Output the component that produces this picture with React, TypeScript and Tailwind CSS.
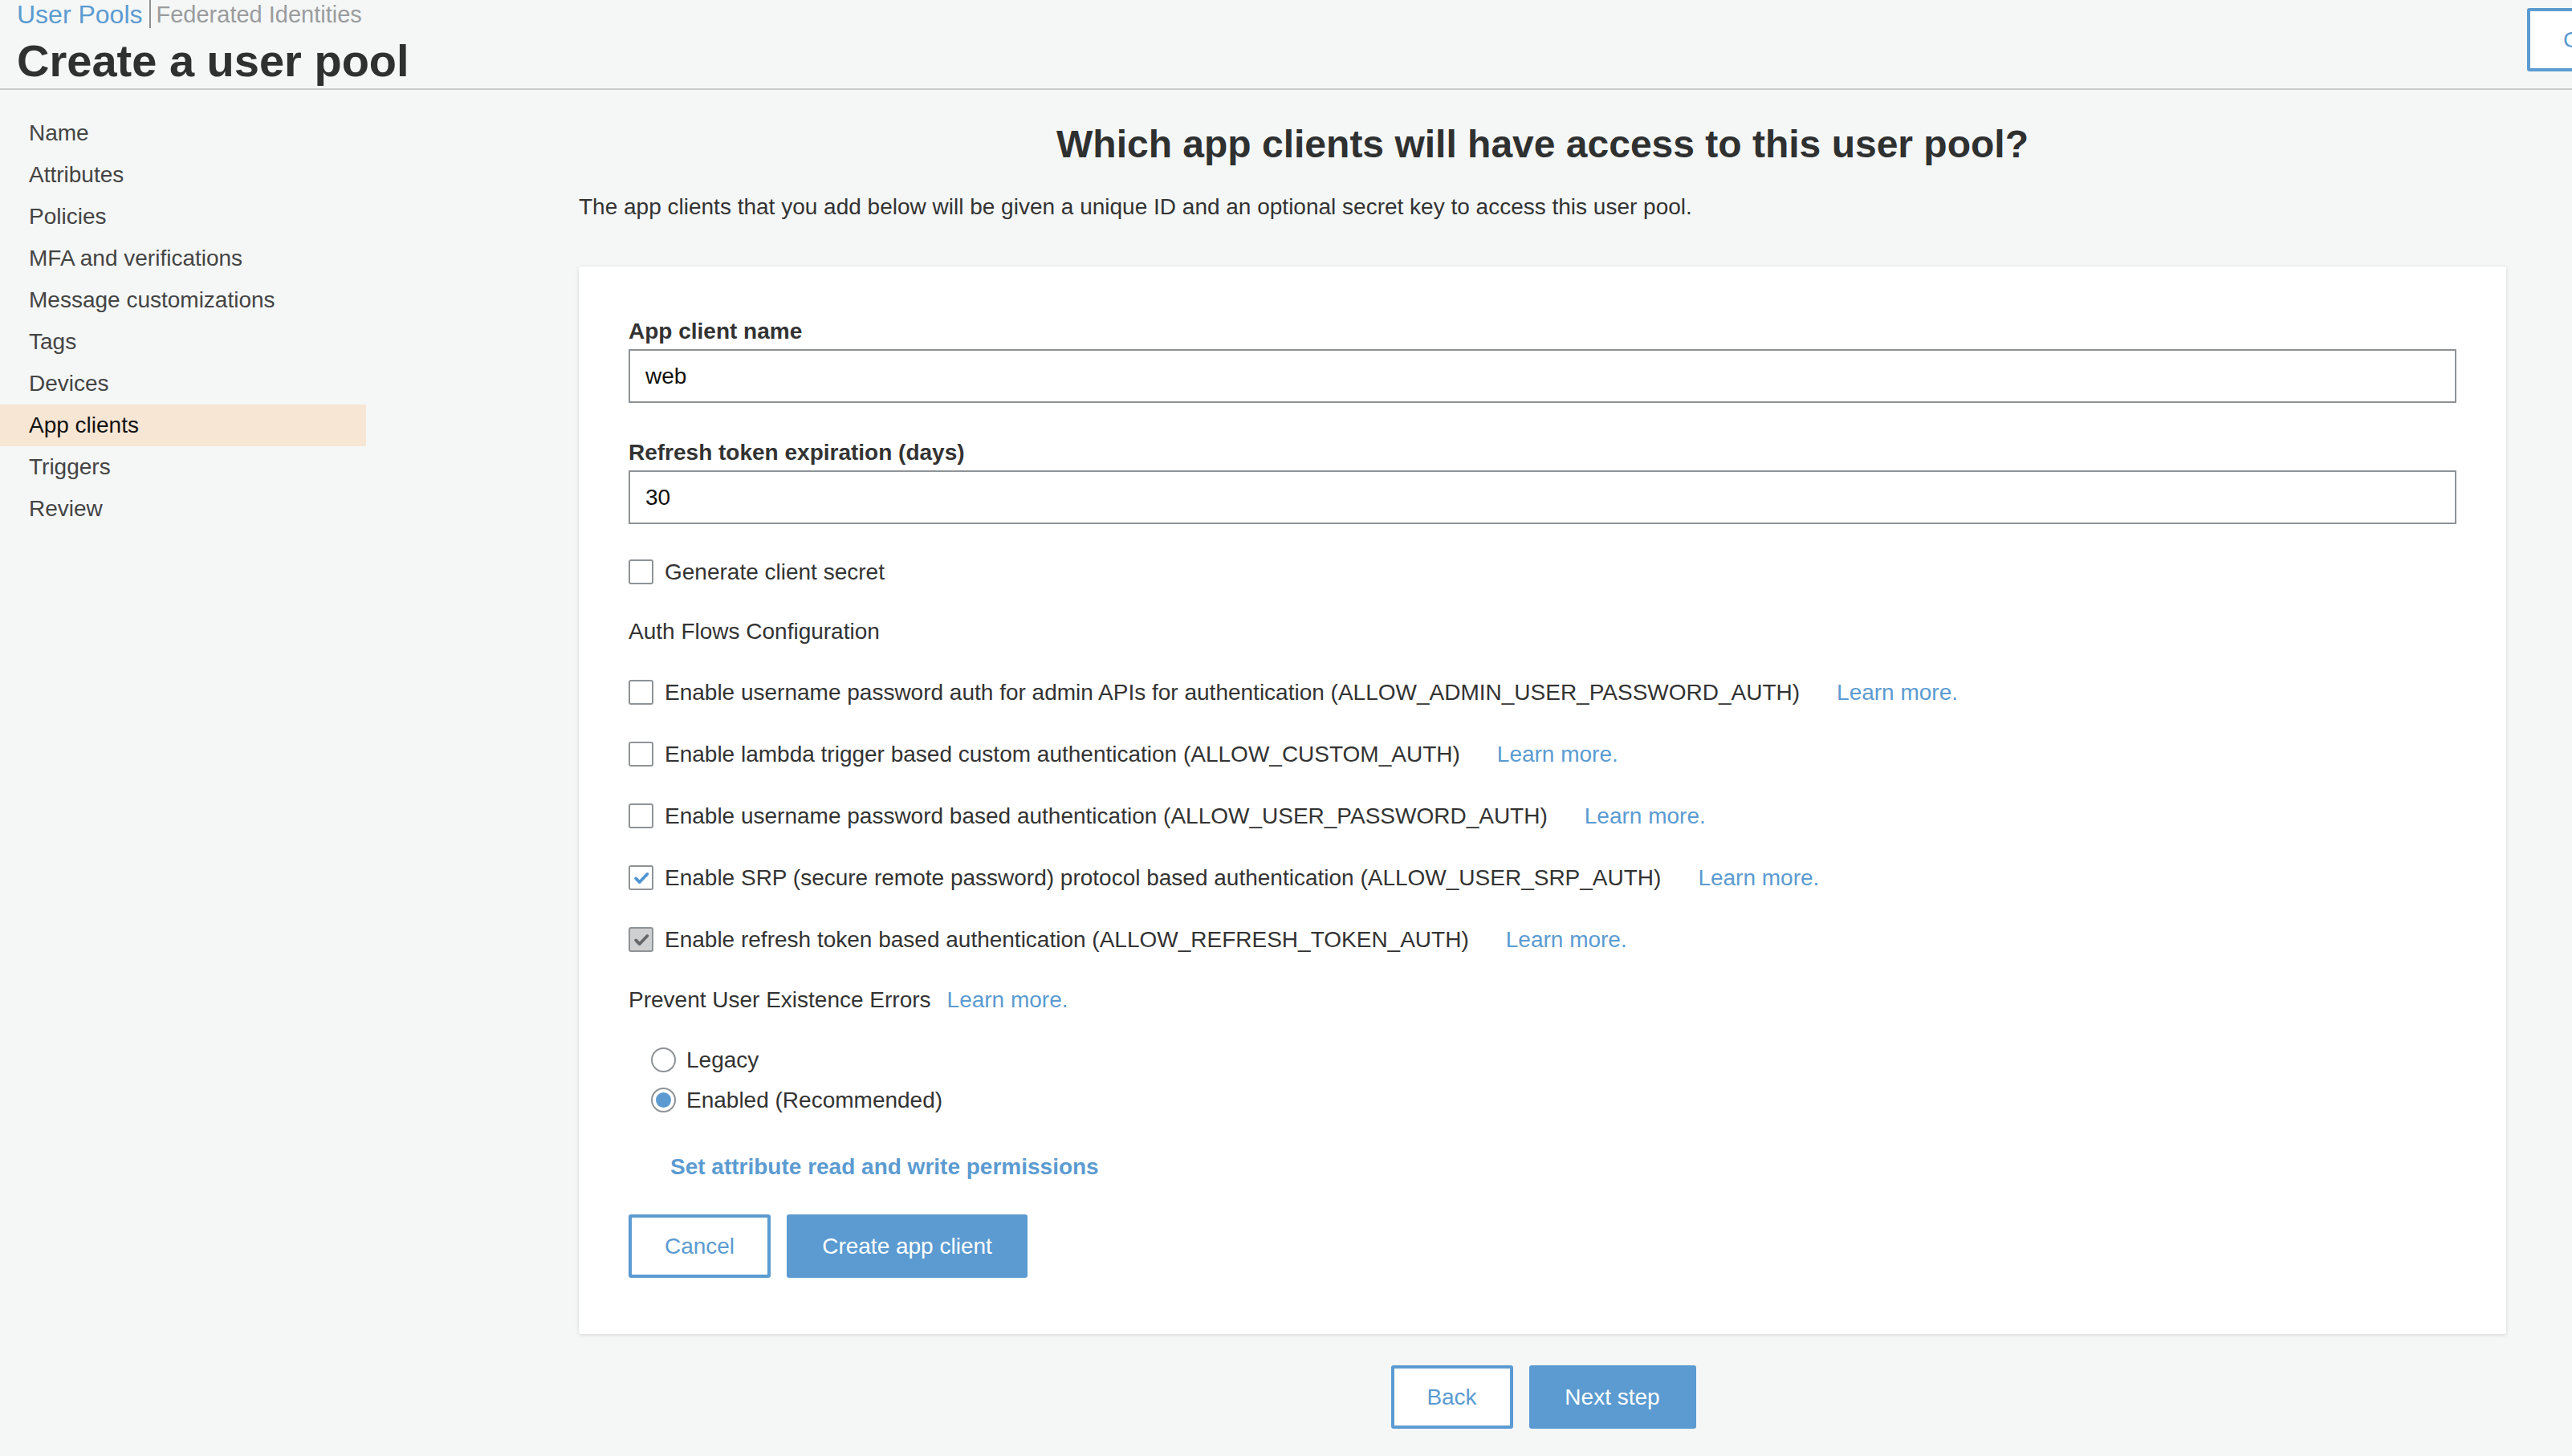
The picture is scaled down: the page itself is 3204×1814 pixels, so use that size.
import React from "react";

function Check({ color }: { color: string }) {
  return (
    <svg width="22" height="22" viewBox="0 0 24 24" fill="none">
      <path d="M4.5 12.5l5 5L20 6.5" stroke={color} strokeWidth="4.2" strokeLinecap="round" strokeLinejoin="round" />
    </svg>
  );
}

function Checkbox({ state }: { state: "off" | "on" | "disabled" }) {
  if (state === "on") {
    return (
      <span className="flex h-[31px] w-[31px] shrink-0 items-center justify-center rounded-[3px] border-2 border-[#8e9397] bg-white">
        <Check color="#4f95d3" />
      </span>
    );
  }
  if (state === "disabled") {
    return (
      <span className="flex h-[31px] w-[31px] shrink-0 items-center justify-center rounded-[3px] border-2 border-[#8e9397] bg-[#cfd0d1]">
        <Check color="#64686b" />
      </span>
    );
  }
  return <span className="block h-[31px] w-[31px] shrink-0 rounded-[3px] border-2 border-[#8e9397] bg-white" />;
}

function Radio({ on }: { on?: boolean }) {
  return (
    <span className="flex h-[31px] w-[31px] shrink-0 items-center justify-center rounded-full border-2 border-[#8e9397] bg-white">
      {on ? <span className="block h-[19px] w-[19px] rounded-full bg-[#5b9bd1]" /> : null}
    </span>
  );
}

const navItems = [
  "Name",
  "Attributes",
  "Policies",
  "MFA and verifications",
  "Message customizations",
  "Tags",
  "Devices",
  "App clients",
  "Triggers",
  "Review",
];

const flows: { text: string; state: "off" | "on" | "disabled" }[] = [
  { text: "Enable username password auth for admin APIs for authentication (ALLOW_ADMIN_USER_PASSWORD_AUTH)", state: "off" },
  { text: "Enable lambda trigger based custom authentication (ALLOW_CUSTOM_AUTH)", state: "off" },
  { text: "Enable username password based authentication (ALLOW_USER_PASSWORD_AUTH)", state: "off" },
  { text: "Enable SRP (secure remote password) protocol based authentication (ALLOW_USER_SRP_AUTH)", state: "on" },
  { text: "Enable refresh token based authentication (ALLOW_REFRESH_TOKEN_AUTH)", state: "disabled" },
];

export default function App() {
  return (
    <div className="min-h-[1814px] w-[3204px] overflow-hidden bg-[#f5f7f7] font-['Liberation_Sans','Helvetica_Neue',Arial,sans-serif] text-[#333333]">
      {/* Header */}
      <header className="flex h-[112px] justify-between border-b-2 border-[#cccccc]">
        <div className="pl-[21px]">
          <div className="flex items-center leading-[36px]">
            <span className="text-[32px] text-[#5b9bd1]">User Pools</span>
            <span className="ml-[8px] mr-[7px] block h-[35px] w-[2px] self-start bg-[#8f8f8f]" />
            <span className="text-[29px] text-[#9a9c9d]">Federated Identities</span>
          </div>
          <h1 className="mt-[8px] text-[56px] font-bold leading-[64px] text-[#2f3030]">Create a user pool</h1>
        </div>
        <div className="w-[56px] overflow-hidden pt-[10px]">
          <div className="flex h-[79px] w-[177px] items-center rounded-[3px] border-4 border-[#5b9bd1] bg-white pl-[41px] text-[28px] text-[#5b9bd1]">
            Cancel
          </div>
        </div>
      </header>

      <div className="flex">
        {/* Sidebar */}
        <aside className="w-[456px] shrink-0 pt-[28px]">
          {navItems.map((item) => (
            <div
              key={item}
              className={
                item === "App clients"
                  ? "h-[52px] bg-[#f7e6d4] pl-[36px] text-[28px] leading-[52px] text-[#111111]"
                  : "h-[52px] pl-[36px] text-[28px] leading-[52px] text-[#444444]"
              }
            >
              {item}
            </div>
          ))}
        </aside>

        {/* Main */}
        <main className="ml-[265px] w-[2401px] shrink-0 pt-[40px]">
          <h2 className="text-center text-[48px] font-bold leading-[56px] text-[#2f3030]">
            Which app clients will have access to this user pool?
          </h2>
          <p className="mt-[32px] text-[28px] leading-[36px] text-[#333333]">
            The app clients that you add below will be given a unique ID and an optional secret key to access this user pool.
          </p>

          <div className="mt-[56px] rounded-[3px] bg-white px-[62px] pb-[70px] pt-[63px] shadow-[0_1px_5px_rgba(0,0,0,0.14)]">
            <div className="mb-[4px] text-[28px] font-bold leading-[36px] text-[#333333]">App client name</div>
            <div className="flex h-[67px] items-center border-2 border-[#8e9397] bg-white px-[19px] text-[28px] text-[#111111]">
              web
            </div>

            <div className="mb-[4px] mt-[44px] text-[28px] font-bold leading-[36px] text-[#333333]">
              Refresh token expiration (days)
            </div>
            <div className="flex h-[67px] items-center border-2 border-[#8e9397] bg-white px-[19px] text-[28px] text-[#111111]">
              30
            </div>

            <div className="mt-[44px] flex h-[31px] items-center">
              <Checkbox state="off" />
              <span className="ml-[14px] text-[28px] leading-[36px]">Generate client secret</span>
            </div>

            <div className="mt-[41px] text-[28px] leading-[36px]">Auth Flows Configuration</div>

            <div className="mt-[42px] flex flex-col gap-[46px]">
              {flows.map((f) => (
                <div key={f.text} className="flex h-[31px] items-center">
                  <Checkbox state={f.state} />
                  <span className="ml-[14px] text-[28px] leading-[36px]">{f.text}</span>
                  <span className="ml-[46px] text-[28px] leading-[36px] text-[#5b9bd1]">Learn more.</span>
                </div>
              ))}
            </div>

            <div className="mt-[42px] flex text-[28px] leading-[36px]">
              <span>Prevent User Existence Errors</span>
              <span className="ml-[20px] text-[#5b9bd1]">Learn more.</span>
            </div>

            <div className="mt-[41px] flex flex-col gap-[19px] pl-[28px]">
              <div className="flex h-[31px] items-center">
                <Radio />
                <span className="ml-[13px] text-[28px] leading-[36px]">Legacy</span>
              </div>
              <div className="flex h-[31px] items-center">
                <Radio on />
                <span className="ml-[13px] text-[28px] leading-[36px]">Enabled (Recommended)</span>
              </div>
            </div>

            <div className="mt-[50px] pl-[52px] text-[28px] font-bold leading-[36px] text-[#5b9bd1]">
              Set attribute read and write permissions
            </div>

            <div className="mt-[41px] flex gap-[20px]">
              <div className="flex h-[79px] w-[177px] items-center justify-center rounded-[3px] border-4 border-[#5b9bd1] bg-white text-[28px] text-[#5b9bd1]">
                Cancel
              </div>
              <div className="flex h-[79px] w-[300px] items-center justify-center rounded-[3px] bg-[#5b9bd1] text-[28px] text-white">
                Create app client
              </div>
            </div>
          </div>

          <div className="mt-[39px] flex justify-center gap-[20px] pl-[2px]">
            <div className="flex h-[79px] w-[152px] items-center justify-center rounded-[3px] border-4 border-[#5b9bd1] bg-white text-[28px] text-[#5b9bd1]">
              Back
            </div>
            <div className="flex h-[79px] w-[208px] items-center justify-center rounded-[3px] bg-[#5b9bd1] text-[28px] text-white">
              Next step
            </div>
          </div>
        </main>
      </div>
    </div>
  );
}
